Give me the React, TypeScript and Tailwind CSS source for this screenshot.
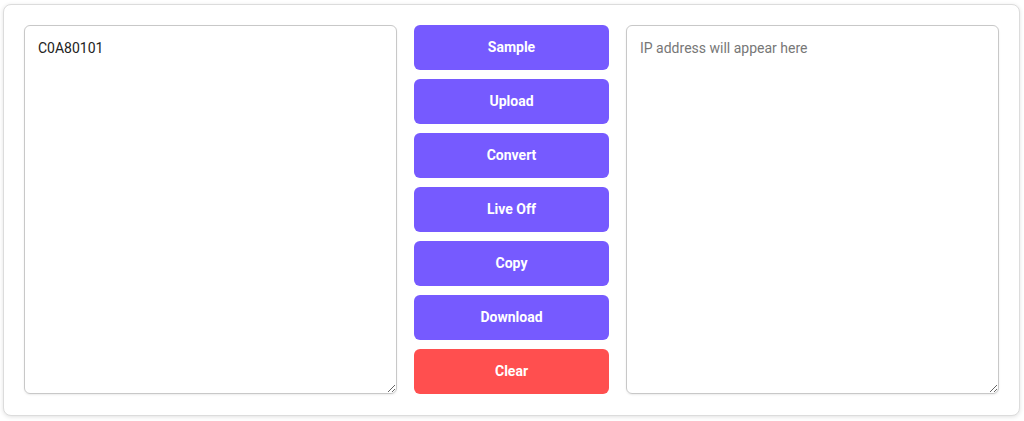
import React from "react";

const btn =
  "h-[45px] w-full rounded-[6px] text-white text-[14px] font-bold flex items-center justify-center";

export default function App() {
  return (
    <div className="w-[1024px] h-[421px] bg-white px-[3px] pt-[4px]" style={{ fontFamily: "Roboto, 'Noto Sans', sans-serif" }}>
      <div className="w-[1017px] h-[412px] rounded-[8px] border border-[#dcdcdc] bg-white shadow-[0_1px_4px_rgba(0,0,0,0.12)] p-[20px] flex gap-[17px]">
        <textarea
          defaultValue="C0A80101"
          className="w-[373px] h-[369px] rounded-[6px] border border-[#c8c8c8] px-[13px] py-[12px] text-[14px] text-[#222] outline-none shadow-[0_1px_2px_rgba(0,0,0,0.08)]"
          style={{ fontFamily: "Roboto, sans-serif" }}
        />
        <div className="w-[195px] flex flex-col gap-[9px]">
          <button className={btn + " bg-[#765aff]"}>Sample</button>
          <button className={btn + " bg-[#765aff]"}>Upload</button>
          <button className={btn + " bg-[#765aff]"}>Convert</button>
          <button className={btn + " bg-[#765aff]"}>Live Off</button>
          <button className={btn + " bg-[#765aff]"}>Copy</button>
          <button className={btn + " bg-[#765aff]"}>Download</button>
          <button className={btn + " bg-[#ff4f4f]"}>Clear</button>
        </div>
        <textarea
          placeholder="IP address will appear here"
          className="w-[373px] h-[369px] rounded-[6px] border border-[#c8c8c8] px-[13px] py-[12px] text-[14px] text-[#222] placeholder:text-[#777] outline-none shadow-[0_1px_2px_rgba(0,0,0,0.08)]"
          style={{ fontFamily: "Roboto, sans-serif" }}
        />
      </div>
    </div>
  );
}
